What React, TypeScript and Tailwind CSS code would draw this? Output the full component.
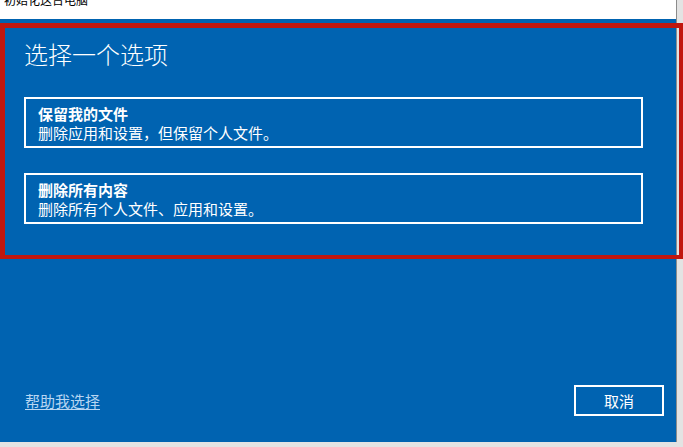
import React from "react";

const font = { fontFamily: '"Microsoft YaHei", "Noto Sans CJK SC", "Noto Sans", sans-serif' };

export default function App() {
  return (
    <div className="relative w-[683px] h-[447px] overflow-hidden bg-[#e3e3e3]" style={font}>
      <div className="flex flex-col w-[677px] h-[442px] border-r border-[#8c8c8c]">
        <div className="h-[19px] bg-white overflow-hidden relative">
          <div className="absolute left-[4px] top-[-8px] text-[12px] leading-[16px] text-black">初始化这台电脑</div>
        </div>
        <div className="flex-1 flex flex-col bg-[#0063b1] text-white">
          <div className="flex flex-col pl-[24px] pt-[19px]">
            <div className="text-[24px] leading-[32px] font-light">选择一个选项</div>
            <div className="mt-[27px] w-[619px] h-[51px] border-2 border-white flex flex-col justify-center px-[12px]">
              <div className="text-[15px] leading-[19px] font-bold">保留我的文件</div>
              <div className="text-[15px] leading-[19px]">删除应用和设置，但保留个人文件。</div>
            </div>
            <div className="mt-[25px] w-[619px] h-[51px] border-2 border-white flex flex-col justify-center px-[12px]">
              <div className="text-[15px] leading-[19px] font-bold">删除所有内容</div>
              <div className="text-[15px] leading-[19px]">删除所有个人文件、应用和设置。</div>
            </div>
          </div>
          <div className="flex-1" />
          <div className="flex items-center justify-between pl-[25px] pr-[12px] pb-[26px]">
            <span className="text-[15px] leading-[20px] text-[#b8d6f2] underline underline-offset-2">帮助我选择</span>
            <div className="w-[90px] h-[31px] border-2 border-white flex items-center justify-center text-[15px] leading-[20px]">取消</div>
          </div>
        </div>
      </div>
      <div className="absolute left-0 top-[23px] w-[683px] h-[236px] border-[#c1170f] border-t-[5px] border-l-[5px] border-r-[4px] border-b-[4px] pointer-events-none" />
    </div>
  );
}
